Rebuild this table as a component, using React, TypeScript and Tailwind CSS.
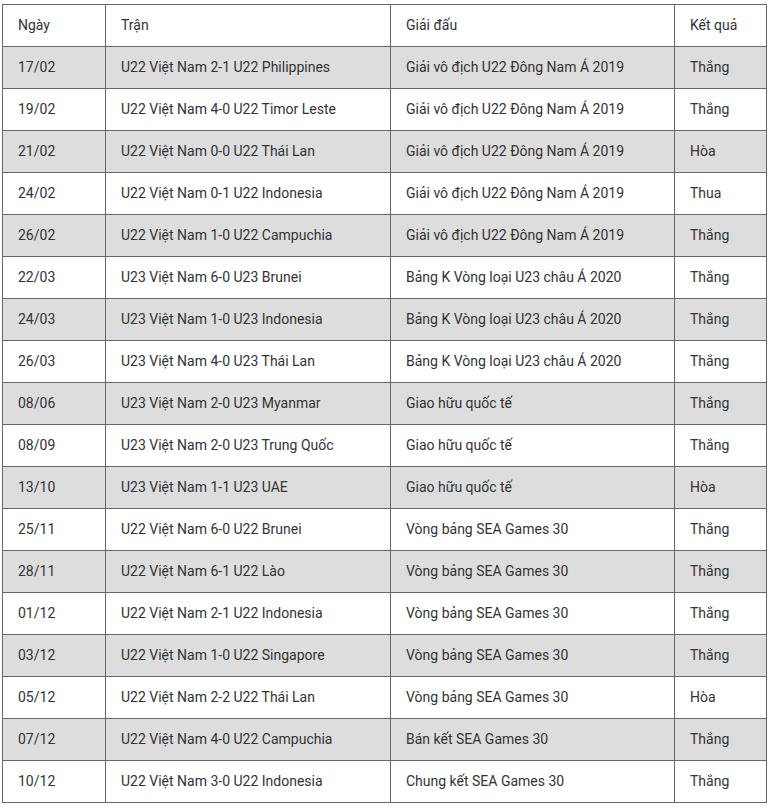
const rows: [string, string, string, string][] = [
  ["17/02", "U22 Việt Nam 2-1 U22 Philippines", "Giải vô địch U22 Đông Nam Á 2019", "Thắng"],
  ["19/02", "U22 Việt Nam 4-0 U22 Timor Leste", "Giải vô địch U22 Đông Nam Á 2019", "Thắng"],
  ["21/02", "U22 Việt Nam 0-0 U22 Thái Lan", "Giải vô địch U22 Đông Nam Á 2019", "Hòa"],
  ["24/02", "U22 Việt Nam 0-1 U22 Indonesia", "Giải vô địch U22 Đông Nam Á 2019", "Thua"],
  ["26/02", "U22 Việt Nam 1-0 U22 Campuchia", "Giải vô địch U22 Đông Nam Á 2019", "Thắng"],
  ["22/03", "U23 Việt Nam 6-0 U23 Brunei", "Bảng K Vòng loại U23 châu Á 2020", "Thắng"],
  ["24/03", "U23 Việt Nam 1-0 U23 Indonesia", "Bảng K Vòng loại U23 châu Á 2020", "Thắng"],
  ["26/03", "U23 Việt Nam 4-0 U23 Thái Lan", "Bảng K Vòng loại U23 châu Á 2020", "Thắng"],
  ["08/06", "U23 Việt Nam 2-0 U23 Myanmar", "Giao hữu quốc tế", "Thắng"],
  ["08/09", "U23 Việt Nam 2-0 U23 Trung Quốc", "Giao hữu quốc tế", "Thắng"],
  ["13/10", "U23 Việt Nam 1-1 U23 UAE", "Giao hữu quốc tế", "Hòa"],
  ["25/11", "U22 Việt Nam 6-0 U22 Brunei", "Vòng bảng SEA Games 30", "Thắng"],
  ["28/11", "U22 Việt Nam 6-1 U22 Lào", "Vòng bảng SEA Games 30", "Thắng"],
  ["01/12", "U22 Việt Nam 2-1 U22 Indonesia", "Vòng bảng SEA Games 30", "Thắng"],
  ["03/12", "U22 Việt Nam 1-0 U22 Singapore", "Vòng bảng SEA Games 30", "Thắng"],
  ["05/12", "U22 Việt Nam 2-2 U22 Thái Lan", "Vòng bảng SEA Games 30", "Hòa"],
  ["07/12", "U22 Việt Nam 4-0 U22 Campuchia", "Bán kết SEA Games 30", "Thắng"],
  ["10/12", "U22 Việt Nam 3-0 U22 Indonesia", "Chung kết SEA Games 30", "Thắng"],
];

const cell = "border border-[#666] h-[42px] px-[15px] text-left font-normal align-middle";

export default function App() {
  return (
    <div className="bg-white pt-[4px] pl-[2px] text-[14px] text-[#333] font-['Roboto',sans-serif]">
      <table className="border-collapse w-[764px] table-fixed">
        <colgroup>
          <col className="w-[103px]" />
          <col className="w-[285px]" />
          <col className="w-[284px]" />
          <col className="w-[92px]" />
        </colgroup>
        <thead>
          <tr>
            <th className={cell}>Ngày</th>
            <th className={cell}>Trận</th>
            <th className={cell}>Giải đấu</th>
            <th className={cell}>Kết quả</th>
          </tr>
        </thead>
        <tbody>
          {rows.map((r, i) => (
            <tr key={i} className={i % 2 === 0 ? "bg-[#dddddd]" : "bg-white"}>
              {r.map((c, j) => (
                <td key={j} className={cell}>
                  {c}
                </td>
              ))}
            </tr>
          ))}
        </tbody>
      </table>
    </div>
  );
}
